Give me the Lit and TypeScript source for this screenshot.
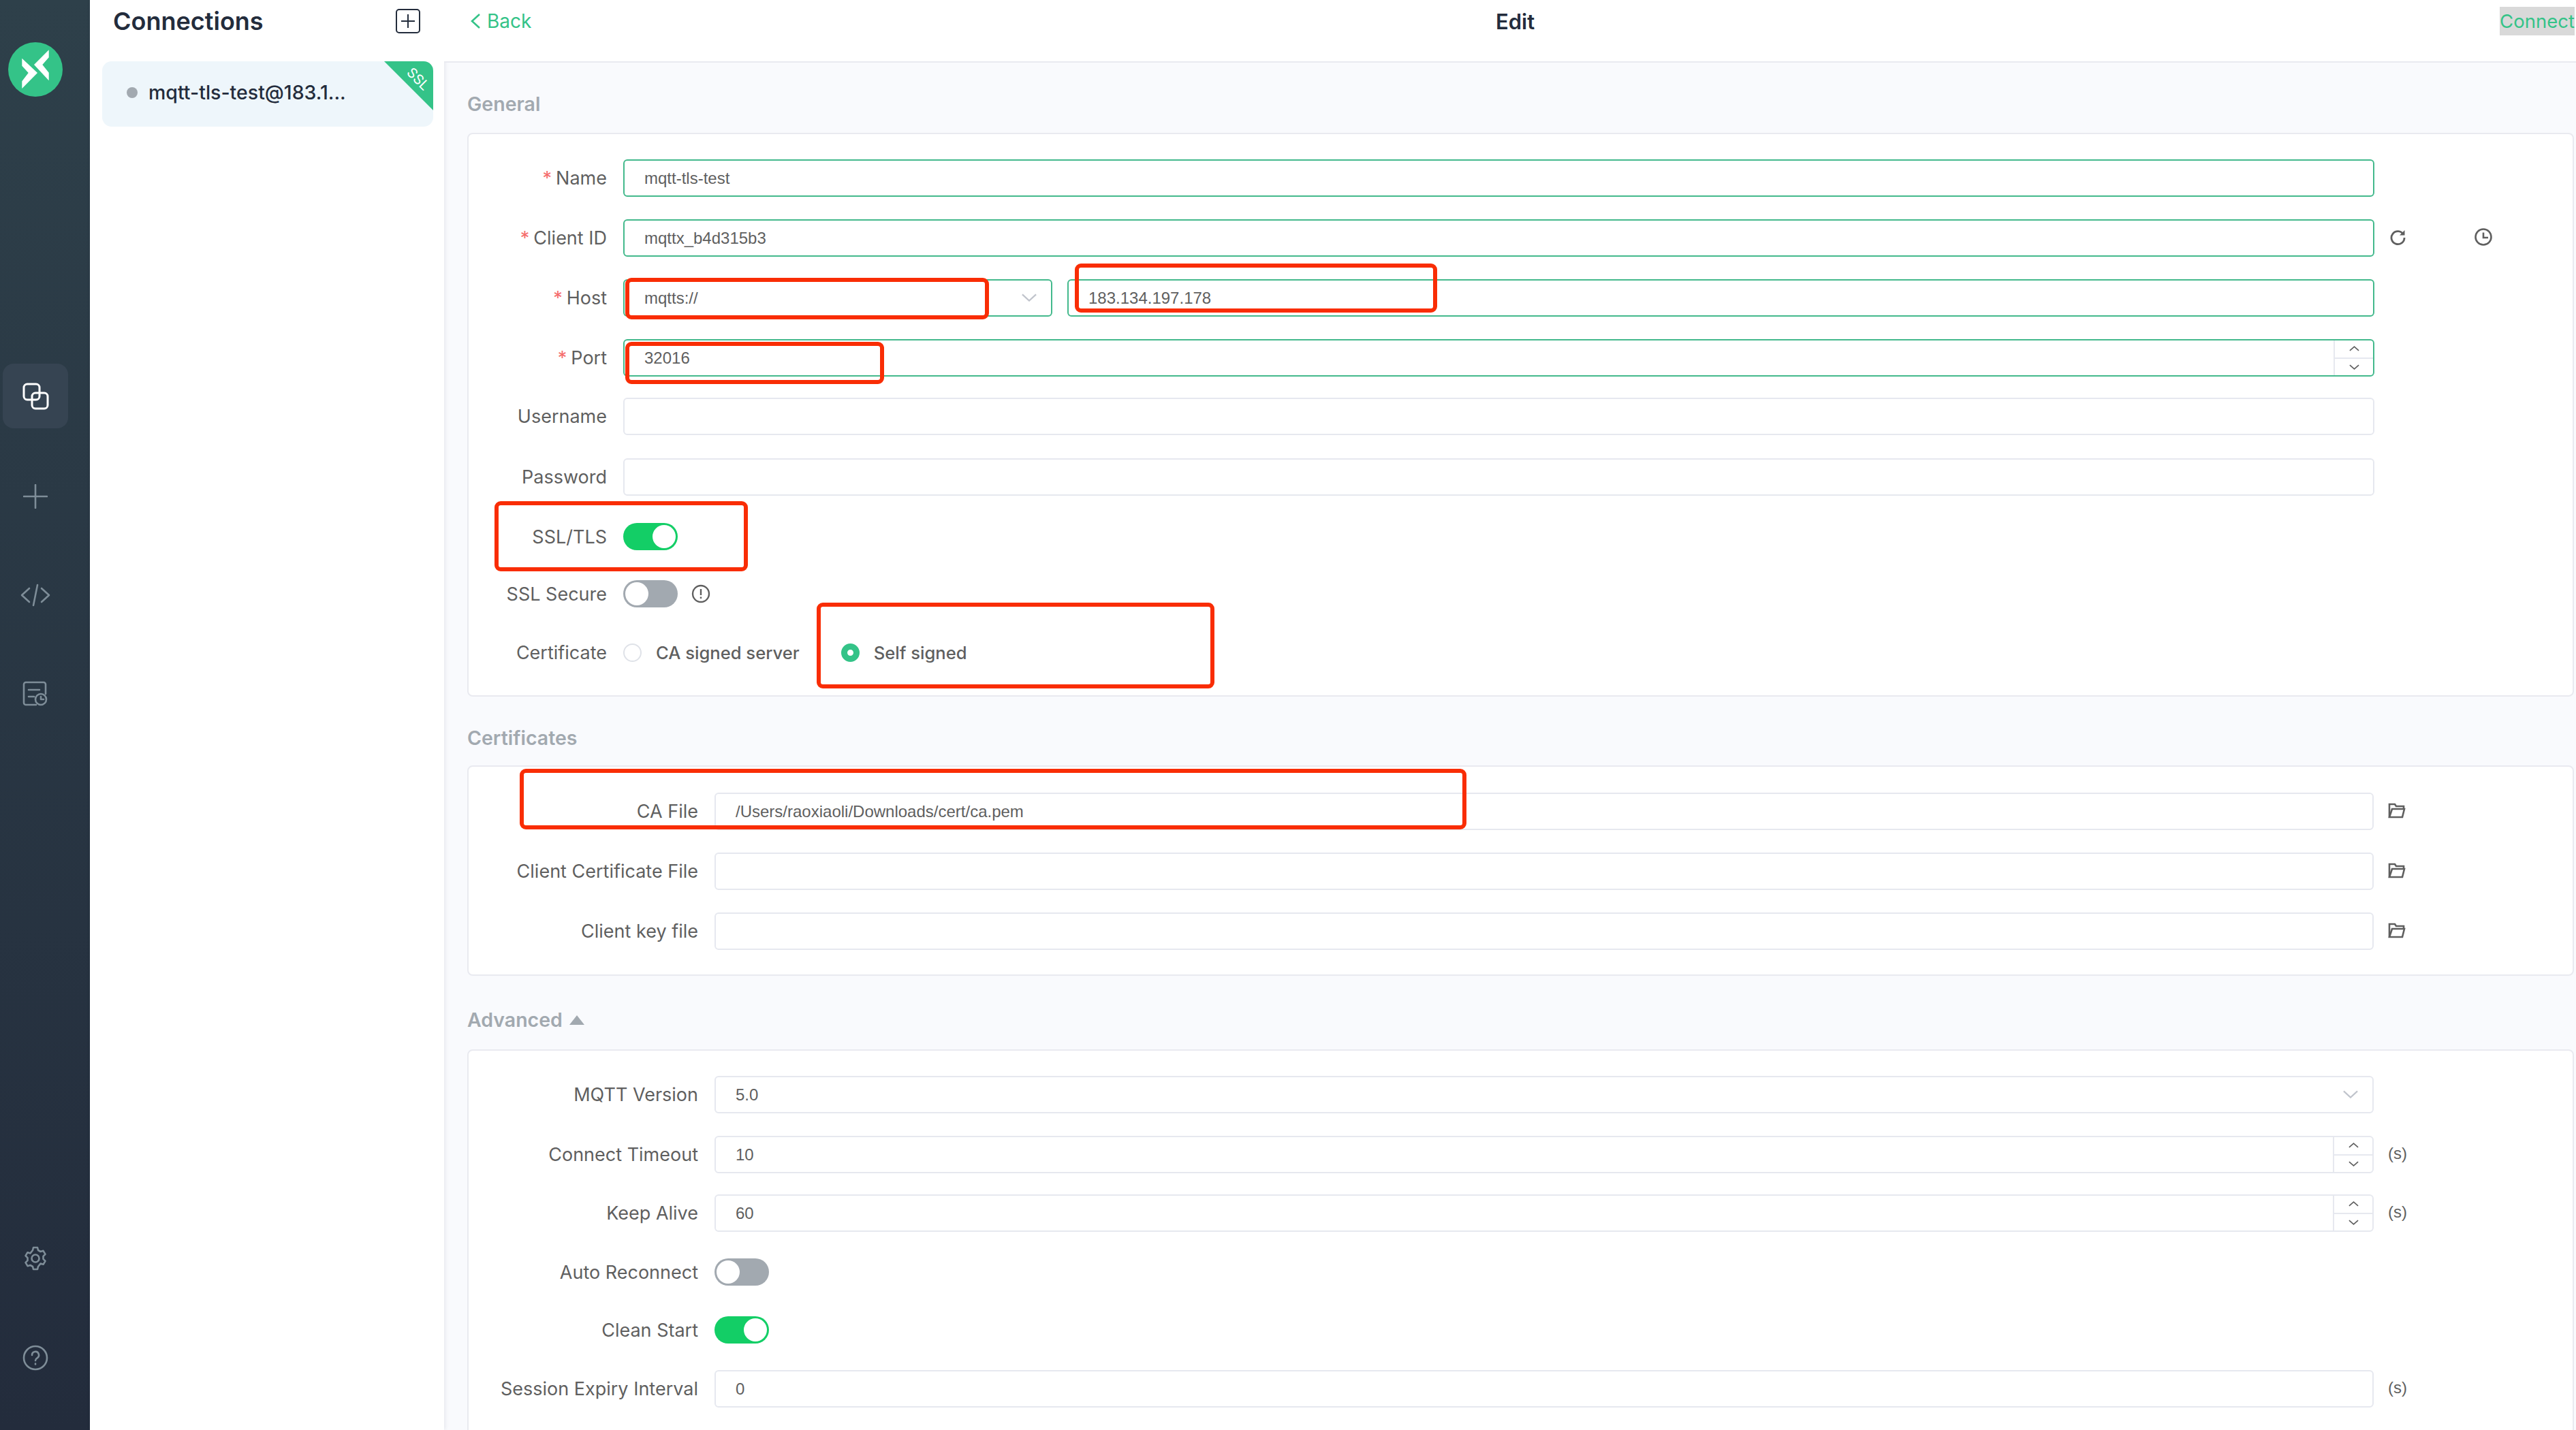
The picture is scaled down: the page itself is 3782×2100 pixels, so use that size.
import { LitElement, css, html } from 'lit';
import { customElement } from 'lit/decorators.js';

const chevron = (up: boolean) => html`<svg class="chev" viewBox="0 0 16 8"><path d=${up ? 'M1 7 8 1l7 6' : 'M1 1l7 6 7-6'} /></svg>`;

const folder = html`<svg class="tail-icon" viewBox="0 0 26 26" fill="none" stroke="#5f5f5f" stroke-width="2.6"><path d="M2 23V4h8l2 3h11v4" /><path d="M2 23l4-12h18l-3 12z" /></svg>`;

type Row = { label: string; value?: string; req?: boolean; active?: boolean; tail?: unknown; spin?: boolean; select?: boolean };

@customElement('app-root')
export class AppRoot extends LitElement {
  static styles = css`
    :host {
      display: block;
      width: 3782px;
      height: 2100px;
      overflow: hidden;
      position: relative;
      font-family: Inter, 'Noto Sans', sans-serif;
    }
    .app {
      display: flex;
      height: 2100px;
    }
    .rail {
      width: 132px;
      flex: none;
      background: linear-gradient(180deg, #2e404a, #232c3c);
      display: flex;
      flex-direction: column;
      align-items: flex-start;
    }
    .logo {
      width: 80px;
      height: 80px;
      margin: 62px 0 0 12px;
    }
    .rail-btn {
      width: 96px;
      height: 95px;
      margin-left: 4px;
      border-radius: 16px;
      display: flex;
      align-items: center;
      justify-content: center;
      margin-top: 50px;
    }
    .rail-btn.active {
      background: #364452;
      margin-top: 392px;
    }
    .rail-btn.first {
      margin-top: 52px;
    }
    .rail-btn.help {
      margin-top: 51px;
      margin-bottom: 59px;
    }
    .rail-btn svg {
      fill: none;
      stroke: #7e8d98;
      stroke-width: 2.6;
      stroke-linecap: round;
      stroke-linejoin: round;
    }
    .rail-btn.active svg {
      stroke: #fff;
      stroke-width: 3;
    }
    .spacer {
      flex: 1;
    }
    .list {
      width: 520px;
      flex: none;
      background: #fff;
      box-shadow: 1px 0 6px rgba(30, 40, 70, 0.1);
      position: relative;
      padding: 0 16px 0 18px;
      box-sizing: border-box;
    }
    .list-head {
      height: 90px;
      display: flex;
      align-items: flex-start;
      justify-content: space-between;
      padding: 13px 19px 0 16px;
      box-sizing: border-box;
    }
    .list-title {
      font-size: 36px;
      line-height: 36px;
      font-weight: 600;
      color: #232c3c;
    }
    .plus {
      width: 36px;
      height: 36px;
      display: block;
    }
    .conn {
      position: relative;
      height: 96px;
      box-sizing: border-box;
      padding-bottom: 5px;
      background: #eef6fb;
      border-radius: 14px;
      display: flex;
      align-items: center;
      padding-left: 36px;
      overflow: hidden;
      color: #232c3c;
    }
    .dot {
      width: 16px;
      height: 16px;
      border-radius: 50%;
      background: #a2a9b0;
      margin-right: 16px;
    }
    .conn-name {
      font-size: 28.5px;
      font-weight: 500;
    }
    .ribbon {
      position: absolute;
      top: 0;
      right: 0;
      width: 0;
      height: 0;
      border-top: 72px solid #34c388;
      border-left: 72px solid transparent;
    }
    .ribbon-text {
      position: absolute;
      top: 14px;
      right: -8px;
      width: 60px;
      text-align: center;
      color: #fff;
      font-size: 20px;
      line-height: 24px;
      transform: rotate(45deg);
    }
    .main {
      flex: 1;
      min-width: 0;
      background: #f9fafd;
      display: flex;
      flex-direction: column;
    }
    .topbar {
      height: 92px;
      flex: none;
      box-sizing: border-box;
      background: #fff;
      border-bottom: 2px solid #e9eaf0;
      position: relative;
      display: flex;
      align-items: flex-start;
      justify-content: space-between;
    }
    .back {
      display: flex;
      align-items: center;
      color: #34c388;
      font-size: 28px;
      height: 62px;
      margin-left: 39px;
      gap: 9px;
    }
    .back svg {
      width: 15px;
      height: 22px;
    }
    .edit {
      position: absolute;
      left: 1544px;
      top: 0;
      height: 64px;
      line-height: 64px;
      font-size: 31px;
      font-weight: 600;
      color: #232c3c;
    }
    .connect {
      margin-top: 10px;
      margin-right: 2px;
      height: 42px;
      width: 110px;
      background: #d9d9d9;
      color: #34c388;
      font-size: 27.5px;
      line-height: 42px;
      text-align: center;
      white-space: nowrap;
    }
    .body {
      padding-left: 34px;
      padding-right: 3px;
    }
    .heading {
      height: 40px;
      line-height: 40px;
      font-size: 28.5px;
      font-weight: 600;
      color: #a2a9b0;
      display: flex;
      align-items: center;
      gap: 10px;
    }
    .tri {
      width: 0;
      height: 0;
      border-left: 11px solid transparent;
      border-right: 11px solid transparent;
      border-bottom: 14px solid #a2a9b0;
    }
    .h-general {
      margin: 41px 0 22px;
    }
    .h-certs {
      margin: 41px 0 20px;
    }
    .h-adv {
      margin: 45px 0 23px;
    }
    .card {
      background: #fff;
      border: 2px solid #e9eaf0;
      border-radius: 8px;
      box-sizing: border-box;
    }
    .card-general {
      padding: 37px 0 43px;
    }
    .card-certs {
      padding: 38px 0 36px;
    }
    .card-adv {
      padding: 37px 0 60px;
    }
    .row {
      display: flex;
      align-items: center;
      height: 55px;
      margin-top: 33px;
    }
    .row:first-child {
      margin-top: 0;
    }
    .row.m31 {
      margin-top: 31px;
    }
    .row.m34 {
      margin-top: 34px;
    }
    .row.m39 {
      margin-top: 39px;
    }
    .row.toggle-row {
      height: 40px;
      margin-top: 39px;
    }
    .row.m40 {
      margin-top: 40px;
    }
    .row.m44 {
      margin-top: 44px;
    }
    .row.m46 {
      margin-top: 46px;
    }
    .row.m45 {
      margin-top: 45px;
    }
    .label {
      flex: none;
      box-sizing: border-box;
      text-align: right;
      font-size: 27px;
      color: #5f5f5f;
      white-space: nowrap;
    }
    .card-general .label {
      width: 203px;
      margin-right: 24px;
    }
    .card-certs .label,
    .card-adv .label {
      width: 337px;
      margin-right: 24px;
    }
    .req {
      color: #f56c6c;
      margin-right: 6px;
    }
    .field {
      flex: 1;
      position: relative;
      height: 55px;
      box-sizing: border-box;
      border: 2px solid #e6e8ef;
      border-radius: 6px;
      background: #fff;
      display: flex;
      align-items: center;
      padding-left: 29px;
      font-family: 'Liberation Sans', Arial, sans-serif;
      font-size: 24px;
      color: #5f5f5f;
    }
    .field.active {
      border-color: #43b98c;
    }
    .inputs {
      flex: none;
      width: 2571px;
      display: flex;
      gap: 22px;
    }
    .card-certs .inputs,
    .card-adv .inputs {
      width: 2436px;
    }
    .host-proto {
      flex: 0 0 630px;
    }
    .select-arrow {
      position: absolute;
      right: 21px;
      top: 19px;
      width: 22px;
      height: 12px;
      fill: none;
      stroke: #c0c4cc;
      stroke-width: 2.4;
    }
    .spin {
      position: absolute;
      right: 0;
      top: 0;
      bottom: 0;
      width: 56px;
      border-left: 2px solid #e6e8ef;
      display: flex;
      flex-direction: column;
    }
    .spin span {
      flex: 1;
      display: flex;
      align-items: center;
      justify-content: center;
    }
    .spin span + span {
      border-top: 2px solid #e6e8ef;
    }
    .chev {
      width: 15px;
      height: 8px;
      fill: none;
      stroke: #5f5f5f;
      stroke-width: 1.8;
    }
    .tail {
      display: flex;
      align-items: center;
      margin-left: 21px;
      padding-bottom: 3px;
      font-family: 'Liberation Sans', Arial, sans-serif;
      font-size: 24px;
      color: #5f5f5f;
      gap: 100px;
    }
    .tail-icon {
      width: 26px;
      height: 26px;
      display: block;
    }
    .toggle {
      width: 80px;
      height: 40px;
      border-radius: 20px;
      background: #a2a9b0;
      position: relative;
      flex: none;
    }
    .toggle::after {
      content: '';
      position: absolute;
      top: 3px;
      left: 3px;
      width: 34px;
      height: 34px;
      border-radius: 50%;
      background: #fff;
    }
    .toggle.on {
      background: #13ce66;
    }
    .toggle.on::after {
      left: 43px;
    }
    .info {
      width: 28px;
      height: 28px;
      margin-left: 20px;
    }
    .radio {
      width: 27px;
      height: 27px;
      box-sizing: border-box;
      border: 2px solid #dfe2e8;
      border-radius: 50%;
      flex: none;
      background: #fff;
    }
    .radio.on {
      border: 9.5px solid #34c388;
    }
    .radio-text {
      font-size: 25.6px;
      font-weight: 500;
      color: #5f5f5f;
      margin-left: 21px;
    }
    .radio-gap {
      margin-left: 61px;
    }
    .mark {
      position: absolute;
      box-sizing: border-box;
      border: 6px solid #f92d05;
      border-radius: 9px;
    }
  `;

  private fieldEl(r: Row) {
    return html`<div class="field ${r.active ? 'active' : ''}">
      ${r.value ?? ''}
      ${r.select ? html`<svg class="select-arrow" viewBox="0 0 24 12"><path d="M1 1l11 10L23 1" /></svg>` : ''}
      ${r.spin ? html`<div class="spin"><span>${chevron(true)}</span><span>${chevron(false)}</span></div>` : ''}
    </div>`;
  }

  private row(r: Row, cls = '') {
    return html`<div class="row ${cls}">
      <div class="label">${r.req ? html`<span class="req">*</span>` : ''}${r.label}</div>
      <div class="inputs">${this.fieldEl(r)}</div>
      ${r.tail ? html`<div class="tail">${r.tail}</div>` : ''}
    </div>`;
  }

  private toggleRow(label: string, on: boolean, cls = '', extra: unknown = '') {
    return html`<div class="row toggle-row ${cls}">
      <div class="label">${label}</div>
      <div class="toggle ${on ? 'on' : ''}"></div>
      ${extra}
    </div>`;
  }

  render() {
    const refresh = html`<svg class="tail-icon" viewBox="0 0 26 26" fill="none" stroke="#5f5f5f" stroke-width="2.8"><path d="M21.500 9A9.500 9.500 0 1 0 23 14" /><path d="M23.500 3v7.500H16z" fill="#5f5f5f" stroke="none" /></svg>`;
    const clock = html`<svg class="tail-icon" viewBox="0 0 26 26" fill="none" stroke="#5f5f5f" stroke-width="2.6"><circle cx="13" cy="13" r="11.500" /><path d="M13 6.500V14h7" /></svg>`;
    const info = html`<svg class="info" viewBox="0 0 28 28" fill="none" stroke="#5f5f5f" stroke-width="2.400"><circle cx="14" cy="14" r="12" /><path d="M14 7v9M14 18.500v2.500" /></svg>`;

    return html`<div class="app">
      <nav class="rail">
        <svg class="logo" viewBox="0 0 80 80">
          <circle cx="40" cy="40" r="40" fill="#34c388" />
          <path fill="#fff" d="M20.300 23.700 43 45 20.300 68V57.300L29.700 45 20.300 34.700zM59.700 11.300 38 33 59.700 56.300V44.700L50.300 33 59.700 22.300z" />
        </svg>
        <div class="rail-btn active">
          <svg width="40" height="40" viewBox="0 0 40 40">
            <rect x="3" y="2" width="23" height="23" rx="5" />
            <rect x="15" y="15" width="23" height="23" rx="5" />
          </svg>
        </div>
        <div class="rail-btn first">
          <svg width="36" height="36" viewBox="0 0 36 36"><path d="M1 18h34M18 1v34" /></svg>
        </div>
        <div class="rail-btn">
          <svg width="44" height="34" viewBox="0 0 44 34"><path d="M13 7 2 17l11 10M31 7l11 10-11 10M25 2l-6 30" /></svg>
        </div>
        <div class="rail-btn">
          <svg width="38" height="38" viewBox="0 0 38 38">
            <path d="M20 35H5a3 3 0 0 1-3-3V5a3 3 0 0 1 3-3h26a3 3 0 0 1 3 3v14" />
            <path d="M9 13h16M9 23h8" />
            <circle cx="27" cy="27" r="8" />
            <path d="M27 23v4h4" />
          </svg>
        </div>
        <div class="spacer"></div>
        <div class="rail-btn">
          <svg width="36" height="36" viewBox="0 0 36 36">
            <circle cx="18" cy="18" r="5.500" />
            <path d="M15 2h6l1 4 3.500 2 4-1.200 3 5-3 3v4l3 3-3 5-4-1.200L22 30l-1 4h-6l-1-4-3.500-2-4 1.200-3-5 3-3v-4l-3-3 3-5 4 1.200L14 6z" />
          </svg>
        </div>
        <div class="rail-btn help">
          <svg width="38" height="38" viewBox="0 0 38 38">
            <circle cx="19" cy="19" r="17" />
            <path d="M14 15a5 5 0 1 1 7.500 4.300c-1.700 1-2.500 1.700-2.500 3.700M19 27.500v1" />
          </svg>
        </div>
      </nav>

      <aside class="list">
        <div class="list-head">
          <div class="list-title">Connections</div>
          <svg class="plus" viewBox="0 0 36 36" fill="none" stroke="#232c3c" stroke-width="2"><rect x="1" y="1" width="34" height="34" rx="4" /><path d="M18 8v20M8 18h20" /></svg>
        </div>
        <div class="conn">
          <span class="dot"></span><span class="conn-name">mqtt-tls-test@183.1...</span>
          <span class="ribbon"></span><span class="ribbon-text">SSL</span>
        </div>
      </aside>

      <main class="main">
        <header class="topbar">
          <div class="back">
            <svg viewBox="0 0 15 22" fill="none" stroke="#34c388" stroke-width="2.600"><path d="M13 1 2 11l11 10" /></svg>
            Back
          </div>
          <div class="edit">Edit</div>
          <div class="connect">Connect</div>
        </header>
        <div class="body">
          <div class="heading h-general">General</div>
          <section class="card card-general">
            ${this.row({ label: 'Name', value: 'mqtt-tls-test', req: true, active: true })}
            ${this.row({ label: 'Client ID', value: 'mqttx_b4d315b3', req: true, active: true, tail: html`${refresh}${clock}` })}
            <div class="row">
              <div class="label"><span class="req">*</span>Host</div>
              <div class="inputs">
                <div class="field active host-proto">mqtts://<svg class="select-arrow" viewBox="0 0 24 12"><path d="M1 1l11 10L23 1" /></svg></div>
                <div class="field active">183.134.197.178</div>
              </div>
            </div>
            ${this.row({ label: 'Port', value: '32016', req: true, active: true, spin: true })}
            ${this.row({ label: 'Username' }, 'm31')}
            ${this.row({ label: 'Password' }, 'm34')}
            ${this.toggleRow('SSL/TLS', true, 'm40')}
            ${this.toggleRow('SSL Secure', false, 'm44', info)}
            <div class="row toggle-row m46">
              <div class="label">Certificate</div>
              <div class="radio"></div><span class="radio-text">CA signed server</span>
              <div class="radio on radio-gap"></div><span class="radio-text">Self signed</span>
            </div>
          </section>

          <div class="heading h-certs">Certificates</div>
          <section class="card card-certs">
            ${this.row({ label: 'CA File', value: '/Users/raoxiaoli/Downloads/cert/ca.pem', tail: folder })}
            ${this.row({ label: 'Client Certificate File', tail: folder })}
            ${this.row({ label: 'Client key file', tail: folder })}
          </section>

          <div class="heading h-adv">Advanced <span class="tri"></span></div>
          <section class="card card-adv">
            ${this.row({ label: 'MQTT Version', value: '5.0', select: true })}
            ${this.row({ label: 'Connect Timeout', value: '10', spin: true, tail: '(s)' })}
            ${this.row({ label: 'Keep Alive', value: '60', spin: true, tail: '(s)' }, 'm31')}
            ${this.toggleRow('Auto Reconnect', false)}
            ${this.toggleRow('Clean Start', true, 'm45')}
            ${this.row({ label: 'Session Expiry Interval', value: '0', tail: '(s)' }, 'm39')}
          </section>
        </div>
      </main>
    </div>
    ${[
      [918, 408, 534, 61],
      [1578, 387, 532, 72],
      [918, 502, 380, 62],
      [726, 736, 372, 103],
      [1199, 885, 584, 126],
      [763, 1129, 1390, 89],
    ].map(
      ([x, y, w, h]) => html`<div class="mark" style="left:${x}px;top:${y}px;width:${w}px;height:${h}px"></div>`,
    )}`;
  }
}
